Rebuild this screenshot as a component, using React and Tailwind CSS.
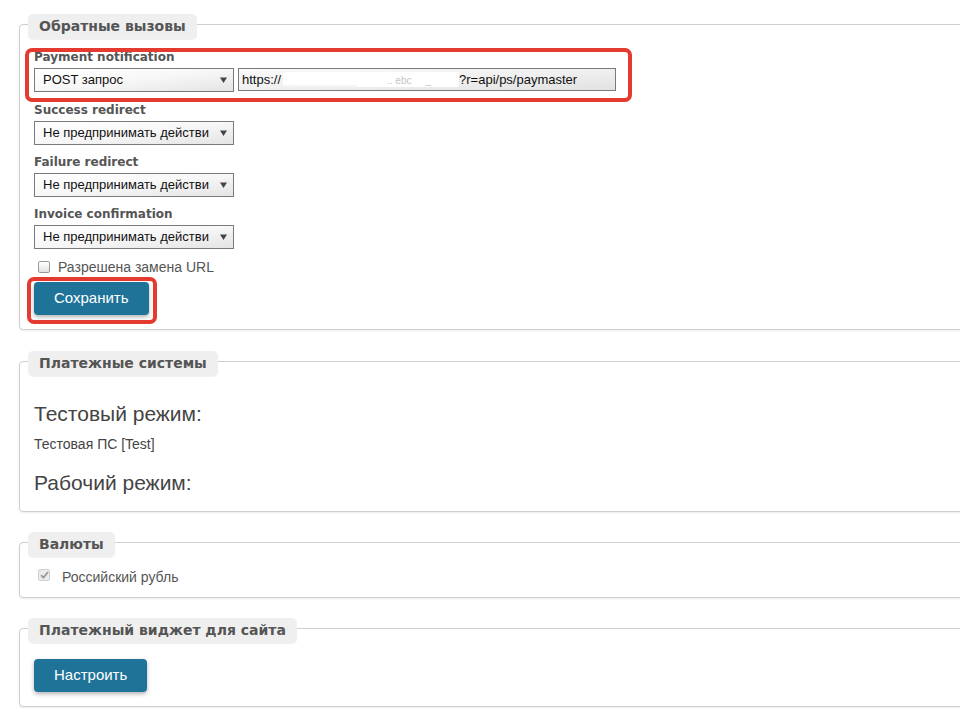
import React from "react";

function Fieldset({ title, className = "", children }) {
  return (
    <div
      className={`relative w-[960px] rounded-[4px] border border-[#cfcfcf] bg-white shadow-[0_1px_2px_rgba(0,0,0,0.08)] pl-[14px] ${className}`}
    >
      <div className="absolute -top-[11px] left-[8px] flex h-[25px] items-center rounded-[5px] bg-[#efefef] px-[11px] text-[14px] font-bold text-[#555] shadow-[0_1px_1px_rgba(0,0,0,0.06)] font-['DejaVu_Sans',Verdana,sans-serif]">
        {title}
      </div>
      {children}
    </div>
  );
}

function Label({ children }) {
  return (
    <div className="mb-[3px] h-[16px] text-[12px] font-bold leading-[17px] text-[#555] font-['DejaVu_Sans',Verdana,sans-serif] whitespace-nowrap">
      {children}
    </div>
  );
}

function Arrow() {
  return (
    <svg width="7" height="6" viewBox="0 0 7 6" className="shrink-0">
      <path d="M0 0.5 L7 0.5 L3.5 6 Z" fill="#444" />
    </svg>
  );
}

function Select({ text }) {
  return (
    <div className="flex h-[24px] w-[200px] items-center border border-[#7a7a7a] bg-linear-to-br from-white via-[#f7f7f7] to-[#e4e4e4] pl-[8px] pr-[6px] text-[13px] text-[#111]">
      <span className="flex-1 overflow-hidden whitespace-nowrap">{text}</span>
      <Arrow />
    </div>
  );
}

function Button({ children }) {
  return (
    <button className="flex h-[33px] items-center rounded-[4px] bg-[#1f7399] px-[20px] text-[15px] text-white shadow-[0_2px_4px_rgba(0,0,0,0.3)]">
      {children}
    </button>
  );
}

export default function App() {
  return (
    <div className="h-[723px] w-[960px] overflow-hidden bg-white pl-[19px] pt-[24px] font-['Liberation_Sans',Arial,sans-serif]">
      <Fieldset title="Обратные вызовы" className="pt-[24px] pb-[14px]">
        <div className="relative w-fit">
          <Label>Payment notification</Label>
          <div className="flex gap-[4px]">
            <Select text="POST запрос" />
            <div className="flex h-[23px] w-[378px] items-center overflow-hidden whitespace-nowrap border border-[#7a7a7a] bg-linear-to-br from-[#fafafa] via-[#f0f0f0] to-[#e2e2e2] pl-[3px] text-[13px] text-[#111]">
              <span>https://</span>
              <span className="ml-[2px] inline-block h-[15px] w-[74px] bg-white shadow-[inset_0_-2px_0_rgba(0,0,0,0.04)]"></span>
              <span className="inline-flex h-[15px] w-[102px] items-end bg-white text-[10px] leading-[12px] text-[#c4c4c4]">
                <span className="ml-[30px]">.. ebc</span>
                <span className="ml-[14px]">_</span>
              </span>
              <span>?r=api/ps/paymaster</span>
            </div>
          </div>
          <div className="pointer-events-none absolute -left-[9px] -top-[1px] h-[54px] w-[607px] rounded-[7px] border-[4px] border-[#e53a2f]"></div>
        </div>

        <div className="mt-[10px]">
          <Label>Success redirect</Label>
          <Select text="Не предпринимать действи" />
        </div>
        <div className="mt-[9px]">
          <Label>Failure redirect</Label>
          <Select text="Не предпринимать действи" />
        </div>
        <div className="mt-[9px]">
          <Label>Invoice confirmation</Label>
          <Select text="Не предпринимать действи" />
        </div>

        <div className="mt-[8px] flex h-[20px] items-center pl-[4px]">
          <span className="inline-block h-[12px] w-[12px] rounded-[2px] border border-[#9a9a9a] bg-linear-to-b from-white to-[#e2e2e2]"></span>
          <span className="ml-[8px] text-[14px] leading-[20px] text-[#555]">Разрешена замена URL</span>
        </div>

        <div className="relative mt-[5px] w-fit">
          <Button>Сохранить</Button>
          <div className="pointer-events-none absolute -bottom-[9px] -left-[7px] -right-[8px] -top-[5px] rounded-[7px] border-[4px] border-[#e53a2f]"></div>
        </div>
      </Fieldset>

      <Fieldset title="Платежные системы" className="mt-[31px] pt-[40px] pb-[16px]">
        <div className="text-[21px] leading-[24px] text-[#444]">Тестовый режим:</div>
        <div className="mt-[8px] text-[14px] leading-[20px] text-[#444]">Тестовая ПС [Test]</div>
        <div className="mt-[17px] text-[21px] leading-[24px] text-[#444]">Рабочий режим:</div>
      </Fieldset>

      <Fieldset title="Валюты" className="mt-[30px] pt-[24px] pb-[10px]">
        <div className="flex h-[20px] items-start pl-[4px]">
          <span className="mt-[2px] flex h-[12px] w-[12px] items-center justify-center rounded-[2px] border border-[#cfcfcf] bg-[#ececec]">
            <svg width="9" height="8" viewBox="0 0 9 8">
              <path d="M1 4.2 L3.4 6.6 L8 1.2" stroke="#9b9b9b" strokeWidth="1.8" fill="none" />
            </svg>
          </span>
          <span className="ml-[12px] text-[14px] leading-[20px] text-[#555]">Российский рубль</span>
        </div>
      </Fieldset>

      <Fieldset title="Платежный виджет для сайта" className="mt-[30px] pt-[30px] pb-[14px]">
        <div className="w-fit">
          <Button>Настроить</Button>
        </div>
      </Fieldset>
    </div>
  );
}
